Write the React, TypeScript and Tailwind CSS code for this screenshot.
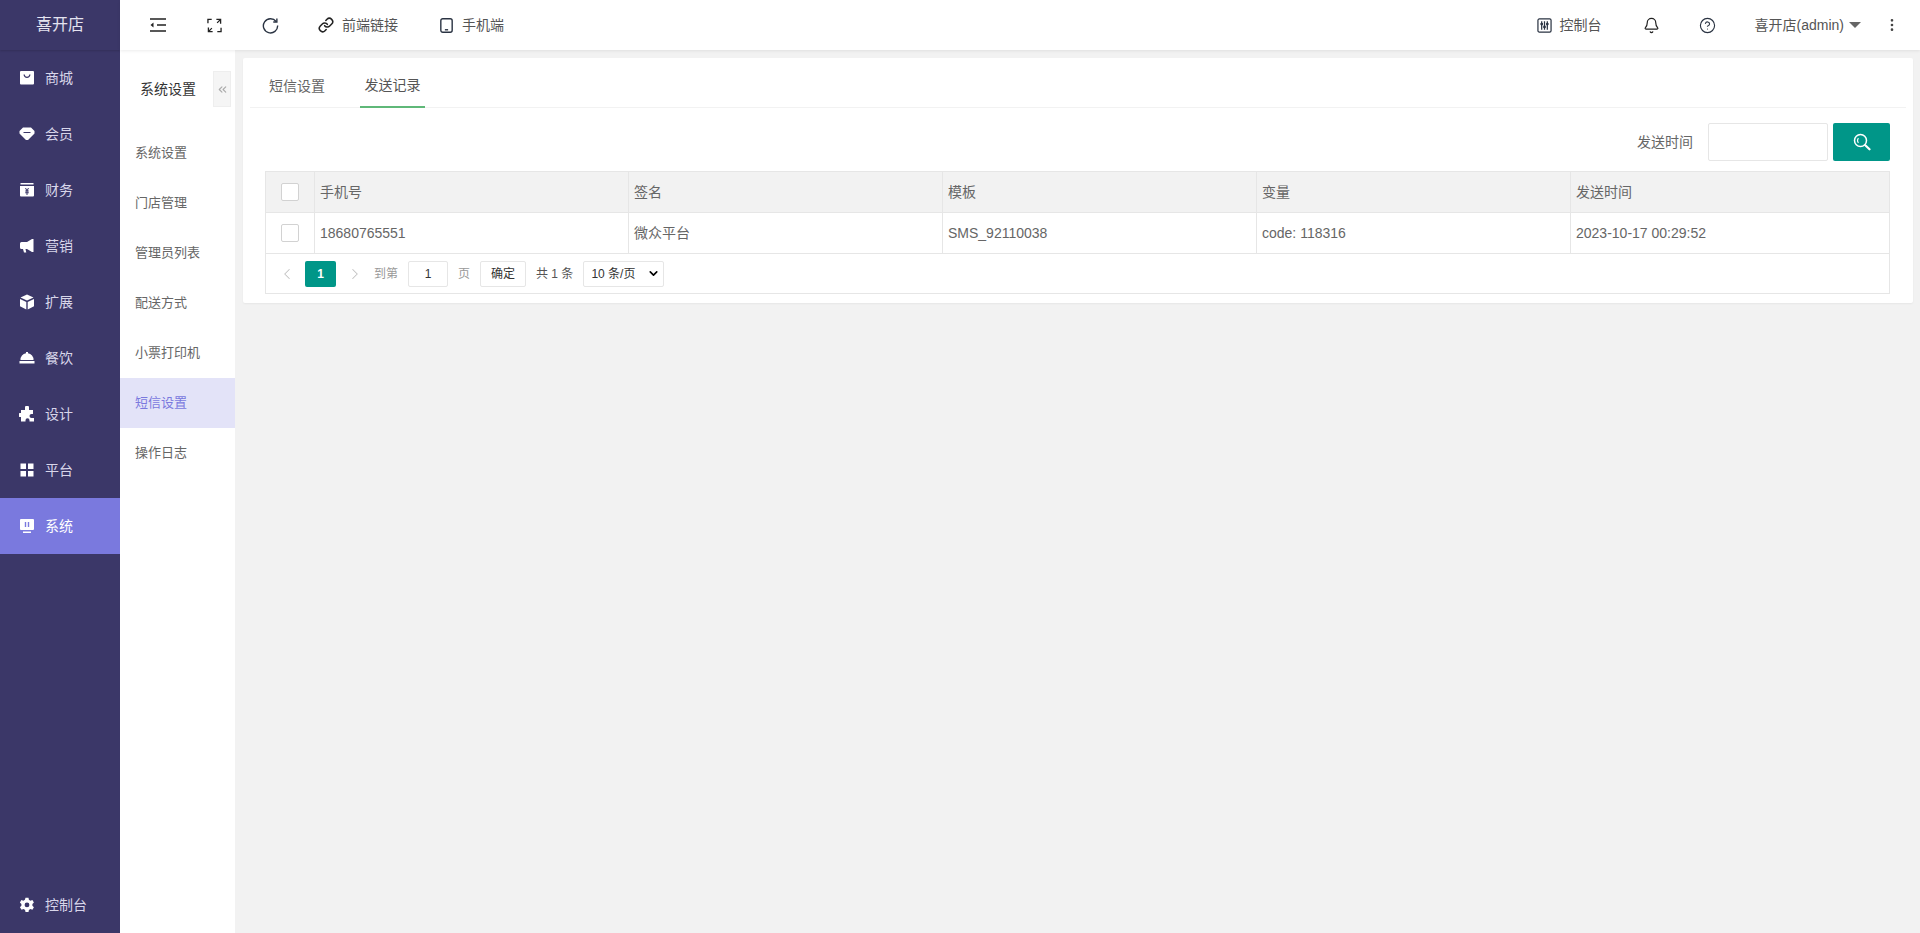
import React from "react";
import {
  Bell,
  ChevronDown,
  ChevronLeft,
  ChevronRight,
  ChevronsLeft,
  CircleHelp,
  EllipsisVertical,
  Link,
} from "lucide-react";

const font = "font-['Liberation_Sans','Noto_Sans_CJK_SC',sans-serif]";

function Solid({ children }: { children: React.ReactNode }) {
  return (
    <svg viewBox="0 0 16 16" className="h-[16px] w-[16px] fill-white">
      {children}
    </svg>
  );
}

const mainMenu = [
  {
    name: "商城",
    icon: <path d="M2 1h12a1 1 0 0 1 1 1v11.500a1 1 0 0 1-1 1H2a1 1 0 0 1-1-1V2a1 1 0 0 1 1-1Zm2.500 3.500c.2 2.300 1.600 3.500 3.500 3.500s3.300-1.200 3.500-3.500h-1.300c-.2 1.500-1 2.200-2.200 2.200S6 6 5.800 4.500Z" fillRule="evenodd" />,
  },
  { name: "会员", icon: <path d="M4 1.500h8l3.500 3.500v2.500L9 14H7L.5 7.500V5Zm.5 4.500v1h7V6Z" fillRule="evenodd" /> },
  {
    name: "财务",
    icon: <path d="M1.500 1h13v1.500h-13ZM1 4h14v9.500a1 1 0 0 1-1 1H2a1 1 0 0 1-1-1Zm5 2 1.300 2.500H6.200v1h1.300v.7H6.200v1h1.300V13h1v-1.800h1.300v-1H8.500v-.7h1.300v-1H8.700L10 6H9L8 7.800 7 6Z" fillRule="evenodd" />,
  },
  { name: "营销", icon: <path d="M13 1h1.500v13H13L8 11H6.500l.8 3.500H5L4 11H2.500A1.500 1.500 0 0 1 1 9.500v-4A1.500 1.500 0 0 1 2.500 4H8Z" /> },
  { name: "扩展", icon: <path d="m8 .5 6.500 3L8 6.500l-6.500-3ZM1 5l6.300 2.900v7.500L1 12.200Zm14 0v7.200l-6.300 3.200V7.900Z" /> },
  { name: "餐饮", icon: <path d="M7 2h2v1.300A6.500 6.500 0 0 1 14.500 10h-13A6.500 6.500 0 0 1 7 3.300ZM.5 11h15v2.500H.5Z" /> },
  {
    name: "设计",
    icon: <path d="M6 1.500a2 2 0 0 1 4 0V4h4v4h-1.500a2 2 0 0 0 0 4H15v3.500h-4.500v-1.200a2 2 0 0 0-4 0v1.200H2V11H1a2 2 0 0 1 0-4h1V4h4Z" />,
  },
  { name: "平台", icon: <path d="M1.500 1.500h5.500V7H1.500ZM9 1.500h5.500V7H9ZM1.500 9H7v5.500H1.500ZM9 9h5.500v5.500H9Z" /> },
  {
    name: "系统",
    icon: <path d="M2 1h12a1 1 0 0 1 1 1v9a1 1 0 0 1-1 1H2a1 1 0 0 1-1-1V2a1 1 0 0 1 1-1Zm3.800 3v5h1.400V4Zm3 0v5h1.400V4ZM4 13.500h8V15H4Z" fillRule="evenodd" />,
  },
];

const subMenu = ["系统设置", "门店管理", "管理员列表", "配送方式", "小票打印机", "短信设置", "操作日志"];

const columns = [
  { title: "手机号", value: "18680765551", w: "w-[314px]" },
  { title: "签名", value: "微众平台", w: "w-[314px]" },
  { title: "模板", value: "SMS_92110038", w: "w-[314px]" },
  { title: "变量", value: "code: 118316", w: "w-[314px]" },
  { title: "发送时间", value: "2023-10-17 00:29:52", w: "flex-1" },
];

function Checkbox() {
  return <span className="block h-[18px] w-[18px] rounded-[2px] border border-[#d2d2d2] bg-white" />;
}

function TableRow({ cells, head }: { cells: string[]; head?: boolean }) {
  return (
    <div className={`flex h-[41px] border-b border-[#e6e6e6] ${head ? "bg-[#f2f2f2]" : "bg-white"}`}>
      <div className="flex w-[49px] items-center justify-center border-r border-[#e6e6e6]">
        <Checkbox />
      </div>
      {columns.map((col, i) => (
        <div
          key={col.title}
          className={`${col.w} flex items-center px-[5px] ${i < 4 ? "border-r border-[#e6e6e6]" : ""}`}
        >
          {cells[i]}
        </div>
      ))}
    </div>
  );
}

export default function App() {
  return (
    <div className={`${font} flex h-[933px] w-full overflow-hidden bg-[#f2f2f2] text-[14px] text-[#666]`}>
      <aside className="flex w-[120px] shrink-0 flex-col bg-[#3b3768] text-[14px] text-[#d8d6ea]">
        <div className="flex h-[50px] items-center justify-center text-[16px] text-[#e4e3f0] shadow-[0_1px_2px_rgba(0,0,0,0.15)]">
          喜开店
        </div>
        {mainMenu.map((item) => (
          <div
            key={item.name}
            className={`flex h-[56px] items-center gap-[10px] pl-[19px] ${item.name === "系统" ? "bg-[#7a79de] text-white" : ""}`}
          >
            <Solid>{item.icon}</Solid>
            <span>{item.name}</span>
          </div>
        ))}
        <div className="mt-auto flex h-[56px] items-center gap-[10px] pl-[19px]">
          <Solid>
            <path
              d="M6.500.8h3l.4 2 1.500.9 2-.7 1.500 2.600-1.500 1.400v1.800l1.500 1.400-1.500 2.600-2-.7-1.500.9-.4 2h-3l-.4-2-1.500-.9-2 .7L.9 10.200l1.500-1.400V7L.9 5.600 2.400 3l2 .7 1.500-.9ZM8 5.500a2.400 2.400 0 1 0 0 4.800 2.400 2.400 0 0 0 0-4.800Z"
              fillRule="evenodd"
            />
          </Solid>
          <span>控制台</span>
        </div>
      </aside>

      <div className="flex min-w-0 flex-1 flex-col">
        <header className="z-10 flex h-[50px] shrink-0 items-center bg-white pl-[30px] pr-[20px] text-[14px] text-[#555] shadow-[0_1px_3px_rgba(0,0,0,0.08)]">
          <svg viewBox="0 0 16 14" className="h-[14px] w-[16px] fill-none stroke-[#222] stroke-[1.400]">
            <path d="M0 1h16M7 7h9M0 13h16" />
            <path d="m3.500 4.500-3 2.500 3 2.500Z" fill="#222" stroke="none" />
          </svg>
          <svg viewBox="0 0 16 16" className="ml-[41px] h-[15px] w-[15px] fill-none stroke-[#222] stroke-[1.400]">
            <path d="M1 5.500v-4h4M10 1.500h4.500V6M14.500 1.500 10.800 5.200M1.500 10v4.500H6M1.500 14.500l3.700-3.700M15 10.500v4h-4" />
          </svg>
          <svg viewBox="0 0 16 16" className="ml-[40px] h-[17px] w-[17px] fill-none stroke-[#2a3342] stroke-[1.300]">
            <path d="M13.300 4.200A6.700 6.700 0 1 0 14.700 8" />
            <path d="M14 1.300v3.400h-3.400" />
          </svg>
          <Link className="ml-[39px] h-[16px] w-[16px] text-[#222]" strokeWidth={2.3} />
          <span className="ml-[8px]">前端链接</span>
          <svg viewBox="0 0 12 14" className="ml-[42px] h-[15px] w-[13px] fill-none stroke-[#2a3342] stroke-[1.300]">
            <rect x="0.700" y="0.700" width="10.600" height="12.600" rx="1.800" />
            <path d="M4.500 11h3" />
          </svg>
          <span className="ml-[9px]">手机端</span>

          <div className="ml-auto flex items-center">
            <svg viewBox="0 0 16 16" className="h-[15px] w-[15px] fill-none stroke-[#2a3342] stroke-[1.300]">
              <rect x="1" y="1" width="14" height="14" rx="1.500" />
              <path d="M5 3.500v9M8 3.500v9M11 3.500v9" />
              <path d="M5 6.500h.01M8 9.500h.01M11 6.500h.01" strokeWidth="3" strokeLinecap="round" />
            </svg>
            <span className="ml-[8px]">控制台</span>
            <Bell className="ml-[41px] h-[17px] w-[17px] text-[#222]" strokeWidth={1.7} />
            <CircleHelp className="ml-[39px] h-[17px] w-[17px] text-[#2a3342]" strokeWidth={1.6} />
            <span className="ml-[39px]">喜开店(admin)</span>
            <span className="ml-[5px] h-0 w-0 border-x-[6px] border-t-[6px] border-x-transparent border-t-[#666]" />
            <EllipsisVertical className="ml-[23px] h-[16px] w-[16px] text-[#444]" strokeWidth={2} />
          </div>
        </header>

        <div className="flex min-h-0 flex-1">
          <nav className="flex w-[115px] shrink-0 flex-col bg-white text-[13px]">
            <div className="flex h-[78px] items-center">
              <span className="ml-[20px] text-[14px] text-[#333]">系统设置</span>
              <button className="ml-[17px] flex h-[36px] w-[18px] items-center justify-center border border-[#eee] bg-[#f5f5f5] text-[#aaa]">
                <ChevronsLeft className="h-[13px] w-[13px]" />
              </button>
            </div>
            <div className="flex flex-col">
              {subMenu.map((name) => (
                <div
                  key={name}
                  className={`flex h-[50px] items-center pl-[15px] ${name === "短信设置" ? "bg-[#e3e3f8] text-[#7a79de]" : ""}`}
                >
                  {name}
                </div>
              ))}
            </div>
          </nav>

          <main className="min-w-0 flex-1 pl-[8px] pr-[7px] pt-[8px]">
            <div className="rounded-[2px] bg-white pb-[9px] shadow-[0_1px_2px_rgba(0,0,0,0.05)]">
              <div className="mx-[7px] flex h-[50px] border-b border-[#f2f2f2] pl-[10px] text-[14px]">
                <div className="flex h-full w-[74px] items-center justify-center pt-[7px] text-[#666]">短信设置</div>
                <div className="ml-[26px] flex h-[50px] w-[65px] items-center justify-center border-b-2 border-[#5fb878] pt-[7px] text-[#555]">
                  发送记录
                </div>
              </div>

              <div className="flex items-center justify-end gap-[5px] pr-[23px] pt-[15px]">
                <span className="mr-[10px] text-[14px]">发送时间</span>
                <input className="h-[38px] w-[120px] rounded-[2px] border border-[#e6e6e6] bg-white" />
                <button className="flex h-[38px] w-[57px] items-center justify-center rounded-[2px] bg-[#009688]">
                  <svg viewBox="0 0 18 18" className="h-[18px] w-[18px] fill-none stroke-white">
                    <circle cx="7.500" cy="7.500" r="6" strokeWidth="1.500" />
                    <path d="M5.500 5.200a3.200 3.200 0 0 0 0 4.600" strokeWidth="1.200" />
                    <path d="m12.300 12.300 4.200 4" strokeWidth="2.200" strokeLinecap="round" />
                  </svg>
                </button>
              </div>

              <div className="ml-[22px] mr-[23px] mt-[10px] border border-[#e6e6e6]">
                <TableRow cells={columns.map((c) => c.title)} head />
                <TableRow cells={columns.map((c) => c.value)} />
                <div className="flex h-[39px] items-center pl-[12px] text-[12px]">
                  <ChevronLeft className="h-[18px] w-[18px] text-[#c2c2c2]" strokeWidth={1.4} />
                  <span className="ml-[9px] flex h-[26px] w-[31px] items-center justify-center rounded-[2px] bg-[#009688] font-bold text-white">
                    1
                  </span>
                  <ChevronRight className="ml-[10px] h-[18px] w-[18px] text-[#c2c2c2]" strokeWidth={1.4} />
                  <span className="ml-[10px] text-[#999]">到第</span>
                  <span className="ml-[10px] flex h-[26px] w-[40px] items-center justify-center rounded-[2px] border border-[#e6e6e6] text-[#333]">
                    1
                  </span>
                  <span className="ml-[10px] text-[#999]">页</span>
                  <span className="ml-[10px] flex h-[26px] w-[46px] items-center justify-center rounded-[2px] border border-[#e6e6e6] text-[#333]">
                    确定
                  </span>
                  <span className="ml-[10px] text-[#555]">共 1 条</span>
                  <span className="ml-[10px] flex h-[26px] w-[81px] items-center justify-between rounded-[2px] border border-[#e6e6e6] pl-[7px] pr-[3px] text-[#333]">
                    10 条/页
                    <ChevronDown className="h-[13px] w-[13px] text-black" strokeWidth={3} />
                  </span>
                </div>
              </div>
            </div>
          </main>
        </div>
      </div>
    </div>
  );
}
